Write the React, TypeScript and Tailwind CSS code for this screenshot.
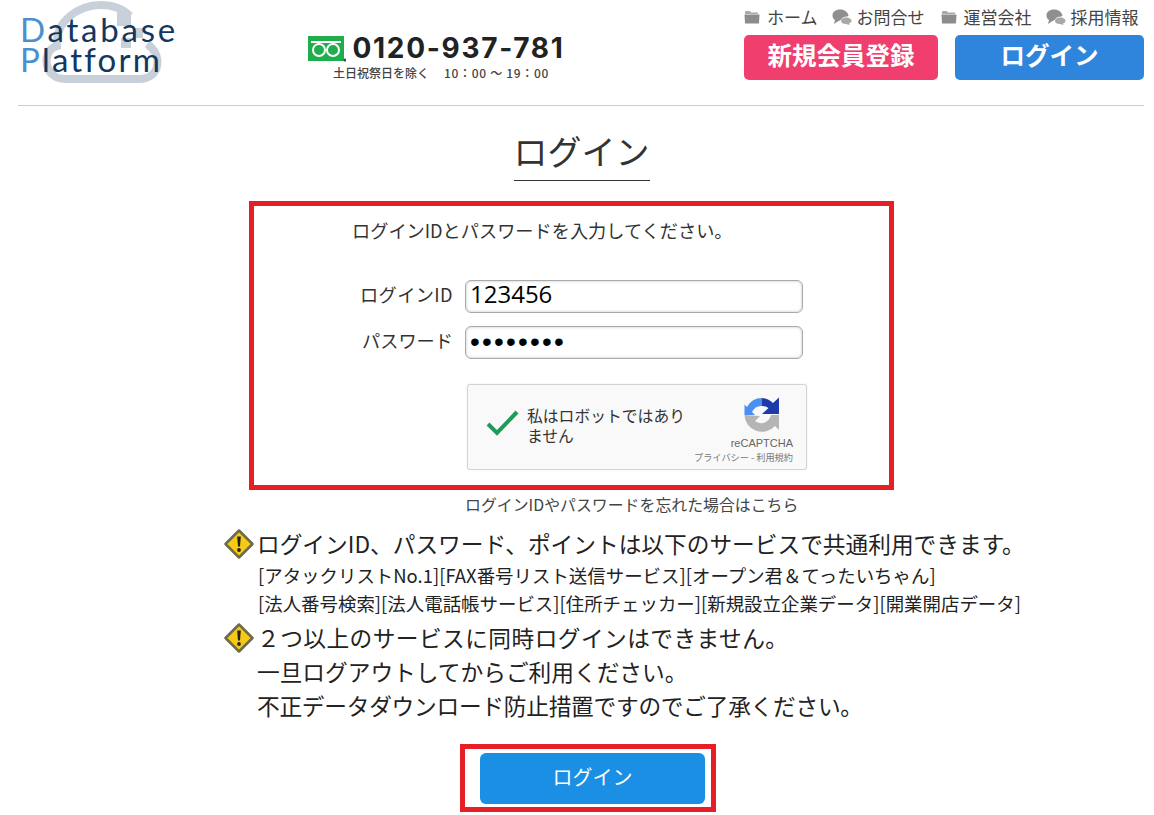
const jp = "font-['Noto_Sans_CJK_JP','Noto_Sans',sans-serif]";

function FolderIcon() {
  return (
    <svg width="16" height="14" viewBox="0 0 16 14" className="shrink-0">
      <path d="M1 3 L1 2 Q1 1 2 1 L6 1 L7 2.500 L14 2.500 L14 4 L1 4 Z" fill="#aaa" />
      <path d="M0.500 4.500 L15.500 4.500 L15 13 Q15 13.500 14 13.500 L2 13.500 Q1 13.500 1 13 Z" fill="#8c8c8c" />
    </svg>
  );
}

function BubbleIcon() {
  return (
    <svg width="20" height="16" viewBox="0 0 20 16" className="shrink-0">
      <path d="M8 0.500 C3.500 0.500 0.500 3 0.500 6.500 C0.500 8.500 1.500 10 3 11 L2 15 L6.500 12 C9 12 9 9 12 8 C14 7.500 16 7.500 16.500 7 C16 3 12.500 0.500 8 0.500 Z" fill="#8f8f8f" />
      <path d="M14 8.500 C11 8.500 9 10 9 12 C9 14 11 15 14 15 L17.500 16 L17 14.500 C18.500 14 19.500 13 19.500 12 C19.500 10 17 8.500 14 8.500 Z" fill="#a8a8a8" />
    </svg>
  );
}

function WarnIcon() {
  return (
    <svg width="30" height="30" viewBox="0 0 30 30" className="shrink-0">
      <path d="M15 1.500 L28.500 15 L15 28.500 L1.500 15 Z" fill="#f6c915" stroke="#6b6b4a" strokeWidth="2.500" strokeLinejoin="round" />
      <path d="M13.200 7.500 L16.800 7.500 L16 17.500 L14 17.500 Z" fill="#222" />
      <circle cx="15" cy="21" r="1.900" fill="#222" />
    </svg>
  );
}

function RecaptchaIcon() {
  return (
    <svg width="36" height="36" viewBox="0 0 36 36">
      <path d="M18 1 A17 17 0 0 0 3 10 L0.500 7.500 L0.500 18 L11 18 L8 15 A10.500 10.500 0 0 1 18 9 Z" fill="#4a90f0" />
      <path d="M18 1 A17 17 0 0 1 29 6 L35 0.500 L35 17 L18 17 L24.500 11 A10 10 0 0 0 18 9 Z" fill="#1c3aa9" />
      <path d="M0.500 18 A17.500 17.500 0 0 0 31 29 L35 33 L35 18 L27 18 A10 10 0 0 1 11 24 L16 19 L0.500 18 Z" fill="#b5b5b5" />
    </svg>
  );
}

function Logo() {
  return (
    <div className="relative w-[160px] h-[85px] ml-[2px]">
      <svg width="130" height="85" viewBox="0 0 130 85" className="absolute left-[15px] top-0">
        <path d="M30 79 C8 79 6 50 22 46 C20 20 45 5 66 5 C78 5 88 9 95 16" fill="none" stroke="#c8d0da" strokeWidth="8" />
        <path d="M112 44 C128 54 126 79 104 79 L30 79" fill="none" stroke="#c8d0da" strokeWidth="8" />
        <rect x="82" y="12" width="14" height="14" fill="#c8d0da" />
        <rect x="98" y="28" width="10" height="10" fill="#c8d0da" />
        <rect x="86" y="38" width="10" height="10" fill="#c8d0da" />
      </svg>
      <div className="absolute left-0 top-[14px] font-['Lato',sans-serif] text-[33px] leading-[30px] text-[#12385f]">
        <div className="tracking-[2.800px]"><span className="text-[#4a90d0]">D</span>atabase</div>
        <div className="tracking-[2.200px]"><span className="text-[#4a90d0]">P</span>latform</div>
      </div>
    </div>
  );
}

function Phone() {
  return (
    <div className="flex flex-col items-center w-[260px] mt-[31px] ml-[126px]">
      <div className="flex items-end">
        <svg width="38" height="26" viewBox="0 0 38 26" className="shrink-0 mb-[3px]">
          <rect width="36" height="25" fill="#1fae4b" />
          <path d="M3 6 L33 6" stroke="#fff" strokeWidth="2" />
          <circle cx="11" cy="14" r="6" fill="none" stroke="#fff" strokeWidth="2" />
          <circle cx="25" cy="14" r="6" fill="none" stroke="#fff" strokeWidth="2" />
          <circle cx="37" cy="24" r="1.500" fill="#444" />
        </svg>
        <span className="font-['Inter',sans-serif] font-bold text-[28px] leading-[34px] tracking-[1.700px] text-[#222] ml-[7px]">0120-937-781</span>
      </div>
      <div className={`${jp} font-medium text-[12px] leading-[16px] text-[#444] ml-[10px] whitespace-pre`}>
        土日祝祭日を除く<span className="ml-[15px] tracking-[0.700px]">10：00 ～ 19：00</span>
      </div>
    </div>
  );
}

function Nav() {
  return (
    <div className="ml-auto w-[400px] pt-[6px]">
      <div className={`${jp} flex items-center h-[22px] text-[17px] text-[#444] whitespace-nowrap`}>
        <FolderIcon /><span className="ml-[7px] mr-[14px]">ホーム</span>
        <BubbleIcon /><span className="ml-[5px] mr-[16px]">お問合せ</span>
        <FolderIcon /><span className="ml-[7px] mr-[14px]">運営会社</span>
        <BubbleIcon /><span className="ml-[5px]">採用情報</span>
      </div>
      <div className={`${jp} flex justify-between mt-[7px] text-white font-bold text-[24.500px]`}>
        <a className="w-[194px] h-[45px] pb-[5px] rounded-[5px] bg-[#f03e6e] flex items-center justify-center">新規会員登録</a>
        <a className="w-[189px] h-[45px] pb-[5px] rounded-[5px] bg-[#2f85dc] flex items-center justify-center">ログイン</a>
      </div>
    </div>
  );
}

export default function App() {
  return (
    <div className={`${jp} w-[1154px] h-[815px] overflow-hidden bg-white text-[#333]`}>
      <div className="ml-[18px] w-[1126px] h-[106px] border-b border-[#ccc] flex items-start">
        <Logo />
        <Phone />
        <Nav />
      </div>

      <div className="flex justify-center ml-[9px] mt-[24px]">
        <h1 className="text-[34px] leading-[42px] h-[51px] border-b border-[#333] text-[#333] font-normal">ログイン</h1>
      </div>

      <div className="w-[645px] h-[289px] ml-[249px] mt-[20px] border-[5px] border-[#e61f26] relative">
        <p className="text-[18.200px] leading-[26px] ml-[98px] mt-[11px] text-[#333] whitespace-nowrap">ログインIDとパスワードを入力してください。</p>
        <div className="flex items-center mt-[37px] h-[33px]">
          <label className="w-[199px] pb-[3px] text-right text-[18.200px] tracking-[0.400px]">ログインID</label>
          <input
            readOnly
            value="123456"
            className="ml-[12px] w-[338px] h-[33px] border border-[#aaa] rounded-[6px] shadow-[inset_0_0_3px_rgba(0,0,0,0.25)] px-[4px] pb-[5px] text-[24px] text-black font-['Open_Sans',sans-serif]"
          />
        </div>
        <div className="flex items-center mt-[13px] h-[33px]">
          <label className="w-[199px] pb-[3px] text-right text-[18.200px]">パスワード</label>
          <input
            readOnly
            type="password"
            value="12345678"
            className="ml-[12px] w-[338px] h-[33px] border border-[#aaa] rounded-[6px] shadow-[inset_0_0_3px_rgba(0,0,0,0.25)] px-[4px] pb-[1px] text-[28px] tracking-[2.200px] text-black font-['Liberation_Sans',sans-serif]"
          />
        </div>
        <div className="ml-[213px] mt-[25px] w-[340px] h-[86px] border border-[#d3d3d3] rounded-[3px] bg-[#f9f9f9] shadow-[0_0_2px_rgba(0,0,0,0.1)] flex">
          <svg width="34" height="28" viewBox="0 0 34 28" className="ml-[18px] mt-[24px] shrink-0">
            <path d="M2 15 L11 24 L31 3" fill="none" stroke="#1f9a5b" strokeWidth="4" />
          </svg>
          <div className="w-[170px] ml-[7px] mt-[21px] text-[15.800px] leading-[20px] text-[#333]">私はロボットではありません</div>
          <div className="ml-auto mr-[13px] mt-[12px] flex flex-col items-end">
            <div className="mr-[13px]"><RecaptchaIcon /></div>
            <span className="mt-[4px] text-[11px] leading-[12px] font-['Liberation_Sans',sans-serif] text-[#666]">reCAPTCHA</span>
            <span className="mt-[2px] text-[9.200px] leading-[12px] text-[#777] whitespace-nowrap">プライバシー - 利用規約</span>
          </div>
        </div>
      </div>

      <div className="ml-[465px] mt-[4px] text-[15.900px] leading-[22px] text-[#444] whitespace-nowrap">ログインIDやパスワードを忘れた場合はこちら</div>

      <div className="ml-[224px] mt-[11px] text-[#222]">
        <div className="flex items-center h-[34px]">
          <WarnIcon />
          <span className="text-[22.700px] leading-[34px] whitespace-nowrap ml-[3px]">ログインID、パスワード、ポイントは以下のサービスで共通利用できます。</span>
        </div>
        <div className="ml-[34px] text-[18.450px] leading-[28px] whitespace-nowrap">
          <div>[アタックリストNo.1][FAX番号リスト送信サービス][オープン君＆てったいちゃん]</div>
          <div>[法人番号検索][法人電話帳サービス][住所チェッカー][新規設立企業データ][開業開店データ]</div>
        </div>
        <div className="flex items-center h-[34px] mt-[4px]">
          <WarnIcon />
          <span className="text-[22.700px] leading-[34px] tracking-[0.450px] whitespace-nowrap ml-[3px]">２つ以上のサービスに同時ログインはできません。</span>
        </div>
        <div className="ml-[33px] text-[22.700px] leading-[34px] whitespace-nowrap">
          <div>一旦ログアウトしてからご利用ください。</div>
          <div className="tracking-[-0.250px]">不正データダウンロード防止措置ですのでご了承ください。</div>
        </div>
      </div>

      <div className="ml-[460px] mt-[21px] w-[256px] h-[68px] border-[5px] border-[#e61f26] flex items-center justify-end pr-[6px]">
        <button className="w-[225px] h-[51px] pb-[3px] rounded-[6px] bg-[#1a8fe3] text-white text-[20px]">ログイン</button>
      </div>
    </div>
  );
}
